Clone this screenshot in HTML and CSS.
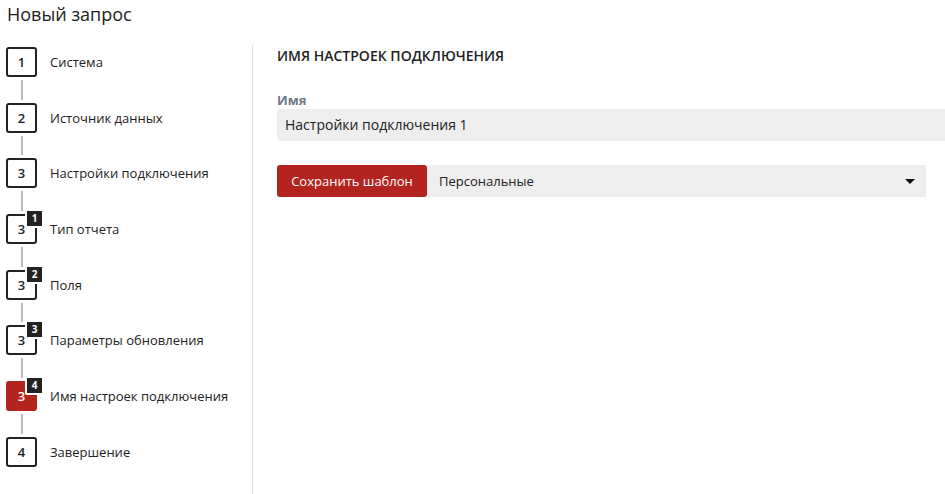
FILE: index.html
```html
<!DOCTYPE html>
<html lang="ru">
<head>
  <meta charset="UTF-8">
  <title>Новый запрос</title>
  <link rel="stylesheet" href="styles.css">
</head>
<body>
  <h1 class="page-title">Новый запрос</h1>

  <div class="wizard">
    <!-- Steps -->
    <div class="steps">
      <div class="step">
        <div class="step-box">1</div>
        <span class="step-label">Система</span>
      </div>
      <div class="link"></div>
      <div class="step">
        <div class="step-box">2</div>
        <span class="step-label">Источник данных</span>
      </div>
      <div class="link"></div>
      <div class="step">
        <div class="step-box">3</div>
        <span class="step-label">Настройки подключения</span>
      </div>
      <div class="link"></div>
      <div class="step">
        <div class="step-box">3<span class="badge">1</span></div>
        <span class="step-label">Тип отчета</span>
      </div>
      <div class="link"></div>
      <div class="step">
        <div class="step-box">3<span class="badge">2</span></div>
        <span class="step-label">Поля</span>
      </div>
      <div class="link"></div>
      <div class="step">
        <div class="step-box">3<span class="badge">3</span></div>
        <span class="step-label">Параметры обновления</span>
      </div>
      <div class="link"></div>
      <div class="step">
        <div class="step-box active">3<span class="badge">4</span></div>
        <span class="step-label">Имя настроек подключения</span>
      </div>
      <div class="link"></div>
      <div class="step">
        <div class="step-box">4</div>
        <span class="step-label">Завершение</span>
      </div>
    </div>

    <!-- Form -->
    <div class="content">
      <h2 class="section-title">Имя настроек подключения</h2>
      <label class="field-label">Имя</label>
      <div class="field-input">Настройки подключения 1</div>

      <div class="template-row">
        <button class="btn-save">Сохранить шаблон</button>
        <div class="select">
          <span>Персональные</span>
          <span class="caret"></span>
        </div>
      </div>
    </div>
  </div>
</body>
</html>
```

FILE: styles.css
```css
body {
  font-family: "Open Sans", "Noto Sans", sans-serif;
  color: #222;
  background-color: #fff;
  margin: 0;
  padding: 0;
  overflow: hidden;
}

.page-title {
  font-size: 18px;
  font-weight: 400;
  line-height: 25px;
  margin: 0;
  padding: 2px 7px 18px;
}

.wizard {
  display: flex;
}

/* Steps */
.steps {
  width: 253px;
  min-height: 449px;
  padding: 2px 0 0 6px;
  box-sizing: border-box;
  border-right: 1px solid #e2e2e2;
}
.step {
  display: flex;
  align-items: center;
  gap: 13px;
  height: 30px;
}
.step-box {
  position: relative;
  width: 31px;
  height: 30px;
  box-sizing: border-box;
  border: 2px solid #222;
  border-radius: 3px;
  display: flex;
  justify-content: center;
  align-items: center;
  font-size: 13px;
  font-weight: 600;
}
.step-box.active {
  background-color: #b3231f;
  border-color: #b3231f;
  color: #fff;
}
.badge {
  position: absolute;
  top: -7px;
  right: -9px;
  width: 15px;
  height: 15px;
  border: 2px solid #fff;
  border-radius: 2px;
  background-color: #222;
  color: #fff;
  font-size: 10px;
  font-weight: 700;
  line-height: 15px;
  text-align: center;
}
.step-label {
  font-size: 13px;
}
.link {
  width: 2px;
  height: 19.7px;
  margin: 3px 0 3px 15px;
  background-color: #bbb;
}

/* Form */
.content {
  flex: 1;
  padding: 2px 0 0 24px;
}
.section-title {
  margin: 0 0 26px;
  font-size: 14px;
  font-weight: 600;
  line-height: 18px;
  text-transform: uppercase;
}
.field-label {
  display: block;
  font-size: 13px;
  font-weight: 700;
  line-height: 18px;
  color: #6e7886;
}
.field-input {
  height: 32px;
  line-height: 32px;
  padding: 0 8px;
  background-color: #eee;
  border-radius: 3px 0 0 3px;
  font-size: 14px;
}
.template-row {
  display: flex;
  margin: 24px 19px 0 0;
  height: 32px;
}
.btn-save {
  width: 150px;
  border: none;
  border-radius: 3px;
  background-color: #b3231f;
  color: #fff;
  font-family: inherit;
  font-size: 13px;
  padding: 0;
}
.select {
  flex: 1;
  display: flex;
  justify-content: space-between;
  align-items: center;
  padding: 0 11px 0 12px;
  background-color: #eee;
  font-size: 13px;
}
.caret {
  width: 0;
  height: 0;
  border-left: 5px solid transparent;
  border-right: 5px solid transparent;
  border-top: 5px solid #111;
}
```
